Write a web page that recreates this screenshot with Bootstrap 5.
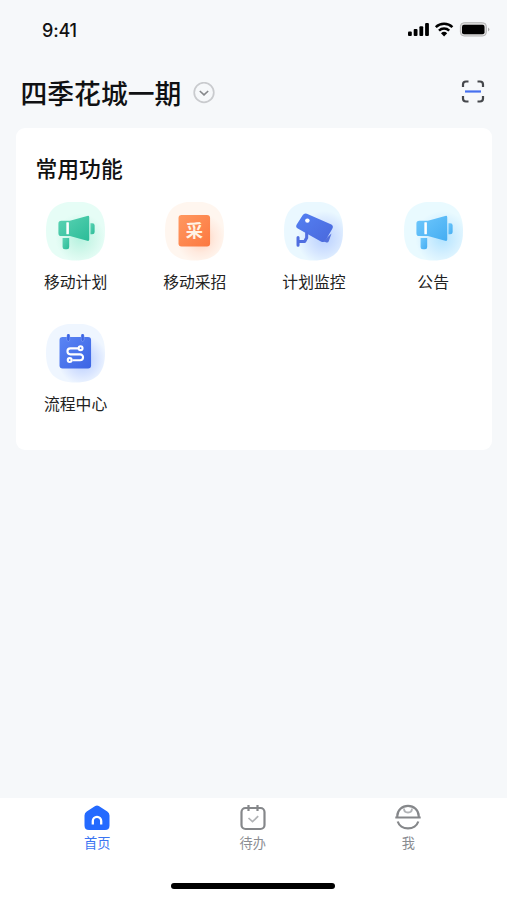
<!DOCTYPE html>
<html lang="zh-CN">
<head>
<meta charset="utf-8">
<meta name="viewport" content="width=device-width, initial-scale=1">
<title>四季花城一期</title>
<link href="https://cdn.jsdelivr.net/npm/bootstrap@5.3.0/dist/css/bootstrap.min.css" rel="stylesheet">
<style>
body{background:#f6f8fa;color:#111;font-family:Inter,"Noto Sans CJK SC",sans-serif}
svg{display:block;flex:none}
.screen{height:900px}
.status{height:60px;padding:1px 17px 1px 42px}
.clock{font-size:18px;font-weight:500;letter-spacing:-.2px;line-height:24px;padding-top:1px}
.heading{height:68px;padding:0 22px 0 20.5px}
.project{font-size:26.800px;line-height:36px;font-weight:500;color:#101113;font-family:"Noto Sans CJK SC",sans-serif}
.place{padding-top:15px;gap:12px}
.panel{margin:0 15px 0 16px;height:322px;border-radius:9px;padding:25px 0 0}
.panel h2{font-size:21.800px;line-height:32px;font-weight:500;margin:0 0 17px 19.5px}
.apps{display:grid;grid-template-columns:repeat(4,119.2px);row-gap:29px}
.app-item{height:93px;color:#222;font-size:15.800px;line-height:24px}
.app-item span{margin-top:10px}
.tabs{height:102px;padding:6px 20px 0 19.5px}
.tab-item{color:#8b8d92;font-size:13.200px;line-height:18px}
.tab-item.current{color:#3b75f2}
.tab-item span{margin-top:2px}
.tabs .row{margin-right:1px}
.home-bar{width:164px;height:6px;border-radius:3px;background:#000;margin:0 auto 11px}
</style>
<script src="https://cdn.jsdelivr.net/npm/bootstrap@5.3.0/dist/js/bootstrap.bundle.min.js"></script>
</head>
<body>
<svg width="0" height="0" class="position-absolute" aria-hidden="true">
<defs>
<linearGradient id="green" x2="1" y2="1"><stop stop-color="#5cd3b4"/><stop offset="1" stop-color="#2bbc98"/></linearGradient>
<linearGradient id="orange" x2="1" y2="1"><stop stop-color="#ff9860"/><stop offset="1" stop-color="#fc7840"/></linearGradient>
<linearGradient id="blue" x2="1" y2="1"><stop stop-color="#5a85f4"/><stop offset="1" stop-color="#3c64e4"/></linearGradient>
<linearGradient id="cam" x2="1" y2="1"><stop stop-color="#5480f2"/><stop offset="1" stop-color="#4a68dc"/></linearGradient>
<linearGradient id="sky" x2="1" y2="1"><stop stop-color="#70c8fc"/><stop offset="1" stop-color="#44adf2"/></linearGradient>
<radialGradient id="greenBg" cx=".58" cy=".62" r=".42"><stop stop-color="#b5f2df"/><stop offset=".6" stop-color="#d4f8ec"/><stop offset="1" stop-color="#e6fdf6"/></radialGradient>
<radialGradient id="orangeBg" cx=".6" cy=".62" r=".42"><stop stop-color="#ffcdb5"/><stop offset=".6" stop-color="#ffeadf"/><stop offset="1" stop-color="#fff6ef"/></radialGradient>
<radialGradient id="blueBg" cx=".62" cy=".62" r=".42"><stop stop-color="#b5cbff"/><stop offset=".6" stop-color="#d8e4ff"/><stop offset="1" stop-color="#eff6ff"/></radialGradient>
<radialGradient id="camBg" cx=".68" cy=".62" r=".46"><stop stop-color="#b9d0ff"/><stop offset=".6" stop-color="#d6e6ff"/><stop offset="1" stop-color="#eaf8ff"/></radialGradient>
<radialGradient id="skyBg" cx=".65" cy=".62" r=".46"><stop stop-color="#b2e3ff"/><stop offset=".6" stop-color="#d5f0ff"/><stop offset="1" stop-color="#e9faff"/></radialGradient>
<path id="tile" d="M29 0C49 0 58 9 58 29S49 58 29 58 0 49 0 29 9 0 29 0Z"/>
<g id="horn"><path d="M15 19h8.500L40.500 14.200Q42.500 13.600 42.500 15.500V37.300Q42.500 39.200 40.500 38.600L23.500 34H15Q12.200 34 12.200 31.200V21.800Q12.200 19 15 19Z"/><path d="M43.700 21.300h1.800q2.300 0 2.300 2.300v6.400q0 2.300-2.300 2.300h-1.800z"/><path d="M16.300 35.800h6.500v9q0 2.200-2.200 2.200h-2.100q-2.200 0-2.200-2.200z"/><rect x="20" y="20.300" width="2.500" height="12" rx=".5" fill="#fff"/></g>
</defs>
</svg>
<main class="screen d-flex flex-column">
<div class="status d-flex align-items-center justify-content-between">
<div class="clock">9:41</div>
<svg width="84" height="18" viewBox="406 20 84 18">
<g fill="#000"><rect x="408" y="30.500" width="3.800" height="4.500" rx="1"/><rect x="413.700" y="28" width="3.800" height="7" rx="1"/><rect x="419.400" y="25.300" width="3.800" height="9.700" rx="1"/><rect x="425.100" y="22" width="3.800" height="13" rx="1"/></g>
<g fill="none" stroke="#000" stroke-width="2.500"><path d="M435.800 26.200a11.800 11.800 0 0 1 16.600 0M439 29.700a7.300 7.300 0 0 1 10.200 0"/></g><path d="M441 32.200a4.500 4.500 0 0 1 6.200 0l-3.100 3.200z"/>
<rect x="460.400" y="21.700" width="26" height="13.300" rx="3.800" fill="#ddd" stroke="#b4b4b4"/><rect x="462" y="23.800" width="22.500" height="9.400" rx="2" fill="#000"/><path d="M488 26.500q2.800 2 0 4z" fill="#aaa"/>
</svg>
</div>
<header class="heading d-flex align-items-start justify-content-between">
<div class="place d-flex align-items-center"><span class="project">四季花城一期</span><svg width="22" height="22" fill="none"><circle cx="11" cy="10.500" r="9.800" stroke="#c9cbce" stroke-width="1.700"/><path d="m6.800 9 4.200 3.800 4.200-3.800" stroke="#85878a" stroke-width="1.600"/></svg></div>
<svg class="mt-3" width="24" height="30" viewBox="0 -4 24 30" fill="none" stroke="#45474b" stroke-width="2.200"><path d="M2 7V4.500Q2 1.500 5 1.500H7.500M16.500 1.500H19Q22 1.500 22 4.500V7M22 16v2.500q0 3-3 3h-2.500M7.500 21.500H5q-3 0-3-3V16"/><path d="M4 11.500h16" stroke="#4670ef"/></svg>
</header>
<section class="panel bg-white">
<h2>常用功能</h2>
<div class="apps">
<div class="app-item d-flex flex-column align-items-center"><svg width="59" height="59" viewBox="0 .5 58 58"><use href="#tile" fill="url(#greenBg)"/><use href="#horn" fill="url(#green)"/></svg><span>移动计划</span></div>
<div class="app-item d-flex flex-column align-items-center"><svg width="59" height="59" viewBox="0 .5 58 58"><use href="#tile" fill="url(#orangeBg)"/><rect x="13.300" y="13.300" width="31" height="31" rx="3" fill="url(#orange)"/><text x="28.800" y="35" text-anchor="middle" font-family="Noto Sans CJK SC, sans-serif" font-size="17" font-weight="700" fill="#fff3e5">采</text></svg><span>移动采招</span></div>
<div class="app-item d-flex flex-column align-items-center"><svg width="59" height="59" viewBox="0 .5 58 58"><use href="#tile" fill="url(#camBg)"/><path d="M22.500 12 46 22.300Q49.200 23.800 47.500 26.700L40.800 38.300Q39.300 40.700 36.700 39.500L13.500 26.500Q11 25 12.500 22.500L18.500 13.200Q20 11 22.500 12Z" fill="url(#cam)"/><path d="M13.800 35.500v7.500M14 39.300h6.300l2-3.700v-4.500" fill="none" stroke="#506ee0" stroke-width="3" stroke-linejoin="round" stroke-linecap="round"/><path d="M46.700 31.500 44 39q-.6 1.500-2.200 1.200l-3.300-1z" fill="#5370dc"/><circle cx="23" cy="18.800" r="2.200" fill="#fff"/></svg><span>计划监控</span></div>
<div class="app-item d-flex flex-column align-items-center"><svg width="59" height="59" viewBox="0 .5 58 58"><use href="#tile" fill="url(#skyBg)"/><use href="#horn" fill="url(#sky)"/></svg><span>公告</span></div>
<div class="app-item d-flex flex-column align-items-center"><svg width="59" height="59" viewBox="0 .5 58 58"><use href="#tile" fill="url(#blueBg)"/><rect x="13.300" y="13.300" width="31" height="31" rx="3" fill="url(#blue)"/><path d="M22 12v4M36 12v4" stroke="#86a4f5" stroke-width="3.400" stroke-linecap="round"/><path d="M22 11.500v4.500M36 11.500v4.500" stroke="#3d65e4" stroke-width="2.400" stroke-linecap="round"/><g fill="none" stroke="#fff" stroke-width="2.100"><path d="M32 24.500h-8a2.900 2.900 0 0 0 0 5.800h9.500a2.900 2.900 0 0 1 0 5.800h-7.500"/><circle cx="34" cy="24.300" r="1.900"/><circle cx="23.300" cy="36" r="1.900"/></g></svg><span>流程中心</span></div>
</div>
</section>
<nav class="tabs bg-white mt-auto d-flex flex-column justify-content-between">
<div class="row g-0 text-center">
<div class="col tab-item current d-flex flex-column align-items-center"><svg width="28" height="28"><path d="M12.200 2Q14 .8 15.800 2L24.300 7.500Q26.500 9 26.500 11.500V21.500Q26.500 26 22 26H6Q1.500 26 1.500 21.500V11.500Q1.500 9 3.700 7.500Z" fill="#246aff"/><path d="M9.800 20.500V17a4.200 4.200 0 0 1 8.400 0v3.500" fill="none" stroke="#fff" stroke-width="2.300"/></svg><span>首页</span></div>
<div class="col tab-item d-flex flex-column align-items-center"><svg width="28" height="28" fill="none" stroke="#85878a" stroke-width="2.200"><rect x="2.500" y="4" width="23" height="21" rx="4"/><path d="M9.500 1v6M18.500 1v6"/><path d="m9.500 14 4 3.700 5.700-5.500" stroke="#b1b3b6" stroke-width="1.700"/></svg><span>待办</span></div>
<div class="col tab-item d-flex flex-column align-items-center"><svg width="28" height="28" fill="none" stroke="#85878a" stroke-width="2.200"><path d="M3.300 13V12a10.700 10.200 0 0 1 21.400 0v1M1.300 13.500h25.400M3.700 17.500a10.700 9.500 0 0 0 20.600 0"/><path d="M10 4.500q0 4 4 4t4-4" stroke="#b1b3b6" stroke-width="1.800"/></svg><span>我</span></div>
</div>
<div class="home-bar"></div>
</nav>
</main>
</body>
</html>
